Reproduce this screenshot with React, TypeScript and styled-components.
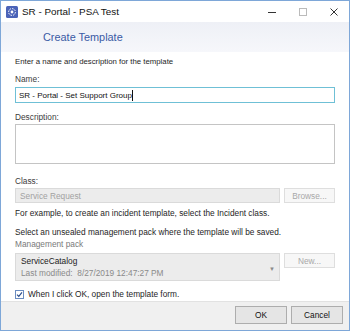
import { FC } from 'react'
import styled, { createGlobalStyle } from 'styled-components'

const Global = createGlobalStyle`
  html, body {
    margin: 0;
    padding: 0;
    background: #ffffff;
  }
  body {
    font-family: 'Liberation Sans', Arial, sans-serif;
  }
`

const Window = styled.div`
  width: 350px;
  height: 331px;
  box-sizing: border-box;
  border: 1px solid #7ea7d8;
  display: flex;
  flex-direction: column;
  background: #fff;
`

const TitleBar = styled.div`
  height: 21px;
  display: flex;
  align-items: center;
  padding-left: 5px;
  background: #fff;
`

const TitleText = styled.span`
  margin-left: 4px;
  font-size: 9.9px;
  color: #111;
`

const WinButtons = styled.div`
  margin-left: auto;
  display: flex;
  align-items: center;
`

const WinButton = styled.div`
  width: 31px;
  height: 21px;
  display: flex;
  align-items: center;
  justify-content: center;
`

const Header = styled.div`
  height: 30px;
  display: flex;
  align-items: center;
  padding-left: 42px;
  background: linear-gradient(180deg, #eef0f6 0%, #f6f7fb 100%);
`

const HeaderTitle = styled.span`
  font-size: 10.9px;
  color: #3a5aa5;
`

const Body = styled.div`
  flex: 1;
  display: flex;
  flex-direction: column;
  padding: 0 14px;
`

const Text = styled.div<{ $mt: number; $tone?: 'dark' | 'label' | 'muted'; $size?: number }>`
  margin-top: ${(p) => p.$mt}px;
  font-size: ${(p) => p.$size ?? 8.3}px;
  line-height: 12px;
  white-space: nowrap;
  color: ${(p) => (p.$tone === 'muted' ? '#7a7a7a' : p.$tone === 'label' ? '#3c3c3c' : '#1e1e1e')};
`

const NameInput = styled.div<{ $mt: number }>`
  margin-top: ${(p) => p.$mt}px;
  height: 16px;
  box-sizing: border-box;
  border: 1px solid #6fc0d6;
  display: flex;
  align-items: center;
  padding-left: 3px;
  font-size: 8px;
  color: #111;
`

const Caret = styled.span`
  display: inline-block;
  width: 1px;
  height: 11px;
  background: #111;
`

const TextArea = styled.div<{ $mt: number }>`
  margin-top: ${(p) => p.$mt}px;
  height: 40px;
  box-sizing: border-box;
  border: 1px solid #c4c4c4;
`

const Row = styled.div<{ $mt: number }>`
  margin-top: ${(p) => p.$mt}px;
  display: flex;
  align-items: flex-start;
  gap: 4px;
`

const DisabledField = styled.div`
  flex: 1;
  height: 15px;
  box-sizing: border-box;
  background: #ececec;
  border: 1px solid #dadada;
  display: flex;
  align-items: center;
  padding-left: 4px;
  font-size: 8.3px;
  color: #a2a2a2;
`

const SideButton = styled.div`
  width: 51px;
  height: 15px;
  box-sizing: border-box;
  background: #f7f7f7;
  border: 1px solid #dedede;
  display: flex;
  align-items: center;
  justify-content: center;
  font-size: 8.3px;
  color: #a8a8a8;
`

const PackSelect = styled.div`
  flex: 1;
  height: 28px;
  box-sizing: border-box;
  background: #ececec;
  border: 1px solid #dadada;
  display: flex;
  align-items: center;
  padding: 0 4px 0 5px;
`

const PackInfo = styled.div`
  flex: 1;
  display: flex;
  flex-direction: column;
`

const PackName = styled.span`
  font-size: 8.3px;
  line-height: 12px;
  color: #222;
`

const PackDate = styled.span`
  font-size: 8.3px;
  line-height: 12px;
  color: #8a8a8a;
`

const Arrow = styled.span`
  font-size: 6px;
  color: #8a8a8a;
  margin-top: 3px;
`

const CheckRow = styled.div<{ $mt: number }>`
  margin-top: ${(p) => p.$mt}px;
  display: flex;
  align-items: center;
  gap: 4px;
  font-size: 8.3px;
  color: #1e1e1e;
`

const Box = styled.div`
  width: 9px;
  height: 9px;
  box-sizing: border-box;
  border: 1px solid #6b8cc0;
  background: #fff;
  display: flex;
  align-items: center;
  justify-content: center;
`

const Footer = styled.div`
  height: 24px;
  border-top: 1px solid #e2e2e2;
  background: #f0f0f0;
  display: flex;
  justify-content: flex-end;
  align-items: flex-start;
  padding: 4px 6px 0 0;
  gap: 4px;
`

const DialogButton = styled.div`
  width: 52px;
  height: 18px;
  box-sizing: border-box;
  background: #e5e5e5;
  border: 1px solid #adadad;
  display: flex;
  align-items: center;
  justify-content: center;
  font-size: 8.3px;
  color: #111;
`

const AppIcon: FC = () => (
  <svg width="12" height="12" viewBox="0 0 12 12">
    <rect x="0" y="0" width="12" height="12" rx="1.5" fill="#4b63b8" />
    <circle cx="6" cy="6" r="3.4" fill="none" stroke="#fff" strokeWidth="1" strokeDasharray="1.6 1" />
    <circle cx="6" cy="6" r="1.4" fill="#fff" />
  </svg>
)

const App: FC = () => {
  return (
    <>
      <Global />
      <Window>
        <TitleBar>
          <AppIcon />
          <TitleText>SR - Portal - PSA Test</TitleText>
          <WinButtons>
            <WinButton>
              <svg width="8" height="8" viewBox="0 0 8 8">
                <path d="M0 4.5h8" stroke="#333" strokeWidth="1" />
              </svg>
            </WinButton>
            <WinButton>
              <svg width="8" height="8" viewBox="0 0 8 8">
                <rect x="0.5" y="0.5" width="7" height="7" fill="none" stroke="#bbb" strokeWidth="1" />
              </svg>
            </WinButton>
            <WinButton>
              <svg width="8" height="8" viewBox="0 0 8 8">
                <path d="M0.5 0.5L7.5 7.5M7.5 0.5L0.5 7.5" stroke="#333" strokeWidth="1" />
              </svg>
            </WinButton>
          </WinButtons>
        </TitleBar>
        <Header>
          <HeaderTitle>Create Template</HeaderTitle>
        </Header>
        <Body>
          <Text $mt={4} $size={7.8}>Enter a name and description for the template</Text>
          <Text $mt={5} $tone="label">Name:</Text>
          <NameInput $mt={2}>
            SR - Portal - Set Support Group
            <Caret />
          </NameInput>
          <Text $mt={8} $tone="label">Description:</Text>
          <TextArea $mt={1} />
          <Text $mt={11} $tone="label">Class:</Text>
          <Row $mt={1}>
            <DisabledField>Service Request</DisabledField>
            <SideButton>Browse...</SideButton>
          </Row>
          <Text $mt={4}>For example, to create an incident template, select the Incident class.</Text>
          <Text $mt={7}>Select an unsealed management pack where the template will be saved.</Text>
          <Text $mt={0} $tone="muted">Management pack</Text>
          <Row $mt={3}>
            <PackSelect>
              <PackInfo>
                <PackName>ServiceCatalog</PackName>
                <PackDate>Last modified:&nbsp; 8/27/2019 12:47:27 PM</PackDate>
              </PackInfo>
              <Arrow>▼</Arrow>
            </PackSelect>
            <SideButton>New...</SideButton>
          </Row>
          <CheckRow $mt={8}>
            <Box>
              <svg width="7" height="7" viewBox="0 0 7 7">
                <path d="M1 3.6L2.8 5.4L6 1.4" fill="none" stroke="#2b4d8c" strokeWidth="1.2" />
              </svg>
            </Box>
            When I click OK, open the template form.
          </CheckRow>
        </Body>
        <Footer>
          <DialogButton>OK</DialogButton>
          <DialogButton>Cancel</DialogButton>
        </Footer>
      </Window>
    </>
  )
}

export default App
